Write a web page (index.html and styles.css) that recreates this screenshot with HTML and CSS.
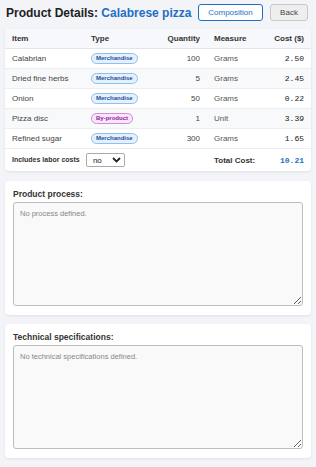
FILE: index.html
```html
<!DOCTYPE html>
<html>
<head>
  <title>Product Details</title>
  <link rel="stylesheet" href="styles.css">
</head>
<body>
  <div class="topo">
    <h1>Product Details: <span class="nome-produto">Calabrese pizza</span></h1>
    <button class="btn btn-composicao">Composition</button>
    <button class="btn btn-voltar">Back</button>
  </div>

  <div class="card tabela-card">
    <table>
      <thead>
        <tr>
          <th class="col-item">Item</th>
          <th class="col-tipo">Type</th>
          <th class="col-qtd">Quantity</th>
          <th class="col-medida">Measure</th>
          <th class="col-custo">Cost ($)</th>
        </tr>
      </thead>
      <tbody>
        <tr>
          <td>Calabrian</td>
          <td><span class="badge merc">Merchandise</span></td>
          <td class="num">100</td>
          <td class="medida">Grams</td>
          <td class="custo">2.50</td>
        </tr>
        <tr class="par">
          <td>Dried fine herbs</td>
          <td><span class="badge merc">Merchandise</span></td>
          <td class="num">5</td>
          <td class="medida">Grams</td>
          <td class="custo">2.45</td>
        </tr>
        <tr>
          <td>Onion</td>
          <td><span class="badge merc">Merchandise</span></td>
          <td class="num">50</td>
          <td class="medida">Grams</td>
          <td class="custo">0.22</td>
        </tr>
        <tr class="par">
          <td>Pizza disc</td>
          <td><span class="badge sub">By-product</span></td>
          <td class="num">1</td>
          <td class="medida">Unit</td>
          <td class="custo">3.39</td>
        </tr>
        <tr>
          <td>Refined sugar</td>
          <td><span class="badge merc">Merchandise</span></td>
          <td class="num">300</td>
          <td class="medida">Grams</td>
          <td class="custo">1.65</td>
        </tr>
      </tbody>
      <tfoot>
        <tr>
          <td colspan="3" class="mao-obra">
            <label for="mao-obra">Includes labor costs</label>
            <span class="select-box">
              <select id="mao-obra">
                <option>no</option>
                <option>yes</option>
              </select>
              <svg class="seta" width="9" height="6" viewBox="0 0 9 6"><path d="M1 1 L4.5 4.5 L8 1" fill="none" stroke="#222" stroke-width="1.8"/></svg>
            </span>
          </td>
          <td class="total-label">Total Cost:</td>
          <td class="total-valor">10.21</td>
        </tr>
      </tfoot>
    </table>
  </div>

  <div class="card texto-card">
    <label for="processo">Product process:</label>
    <textarea id="processo" placeholder="No process defined."></textarea>
  </div>

  <div class="card texto-card">
    <label for="especificacoes">Technical specifications:</label>
    <textarea id="especificacoes" placeholder="No technical specifications defined."></textarea>
  </div>
</body>
</html>
```

FILE: styles.css
```css
/* Estilos da ficha do produto */
body {
  margin: 0;
  padding: 2px 5px 8px 5px;
  background-color: #f3f4f8;
  font-family: "Liberation Sans", Arial, sans-serif;
  color: #333;
}

.topo {
  display: flex;
  align-items: center;
  height: 21px;
  margin-bottom: 6px;
}

.topo h1 {
  flex: 1;
  margin: 0 0 0 1px;
  font-size: 12px;
  font-weight: bold;
  color: #222;
  white-space: nowrap;
}

.nome-produto {
  color: #1f6fc4;
}

.btn {
  font-family: "Liberation Sans", Arial, sans-serif;
  font-size: 8px;
  height: 17px;
  border-radius: 3px;
  padding: 0 4px;
  cursor: pointer;
}

.btn-composicao {
  width: 65px;
  background-color: #fff;
  border: 1px solid #1f6fc4;
  color: #1f6fc4;
  margin-right: 7px;
}

.btn-voltar {
  width: 38px;
  background-color: #eee;
  border: 1px solid #c8c8c8;
  color: #444;
  margin-right: 3px;
}

.card {
  background-color: #fff;
  border-radius: 4px;
  box-shadow: 0 1px 3px rgba(0, 0, 0, 0.08);
  margin-bottom: 9px;
}

.tabela-card {
  overflow: hidden;
  margin-bottom: 10px;
}

table {
  width: 100%;
  border-collapse: collapse;
  table-layout: fixed;
  font-size: 8px;
}

th {
  text-align: left;
  font-weight: bold;
  color: #333;
  background-color: #f7f8fb;
  height: 19px;
  padding: 0 7px;
  border-bottom: 1px solid #e2e4ea;
  white-space: nowrap;
}

td {
  height: 19px;
  padding: 0 7px;
  border-bottom: 1px solid #eceef2;
  color: #444;
  white-space: nowrap;
}

tr.par td {
  background-color: #f8f9fb;
}

.col-item { width: 65px; }
.col-tipo { width: 55px; }
.col-qtd { text-align: right; width: 40px; }
.col-medida { width: 42px; }
.col-custo { text-align: right; }

.num {
  text-align: right;
}

.medida {
  color: #555;
}

.custo {
  text-align: right;
  font-family: "Liberation Mono", "Courier New", monospace;
  font-size: 8px;
  color: #222;
}

.badge {
  display: inline-block;
  font-size: 6px;
  font-weight: bold;
  padding: 1px 4px;
  border-radius: 6px;
  line-height: 7px;
}

.badge.merc {
  background-color: #e4f1fd;
  border: 1px solid #8fc1ef;
  color: #274f9a;
}

.badge.sub {
  background-color: #fae6fb;
  border: 1px solid #d38ad9;
  color: #8a2597;
}

tfoot td {
  border-bottom: none;
  height: 20px;
  padding-top: 1px;
  padding-bottom: 1px;
}

.mao-obra label {
  font-size: 7px;
  font-weight: bold;
  color: #333;
  margin-right: 4px;
}

.select-box {
  position: relative;
  display: inline-block;
  vertical-align: middle;
}

.select-box select {
  appearance: none;
  width: 39px;
  height: 14px;
  font-size: 8px;
  font-family: "Liberation Sans", Arial, sans-serif;
  padding: 0 0 0 6px;
  border: 1px solid #aaa;
  border-radius: 2px;
  background-color: #fff;
  color: #222;
}

.seta {
  position: absolute;
  right: 4px;
  top: 4px;
  pointer-events: none;
}

.total-label {
  font-weight: bold;
  color: #333;
}

.total-valor {
  text-align: right;
  font-family: "Liberation Mono", "Courier New", monospace;
  font-weight: bold;
  color: #1f6fc4;
}

.texto-card {
  padding: 8px 8px 9px 8px;
}

.texto-card label {
  display: block;
  font-size: 8.5px;
  font-weight: bold;
  color: #333;
  margin-bottom: 3px;
}

.texto-card textarea {
  display: block;
  box-sizing: border-box;
  width: 100%;
  height: 104px;
  background-color: #f9f9f9;
  border: 1px solid #bdbdbd;
  border-radius: 3px;
  padding: 6px 6px;
  font-family: "Liberation Sans", Arial, sans-serif;
  font-size: 7.5px;
  color: #333;
}

.texto-card textarea::placeholder {
  color: #888;
}
```
